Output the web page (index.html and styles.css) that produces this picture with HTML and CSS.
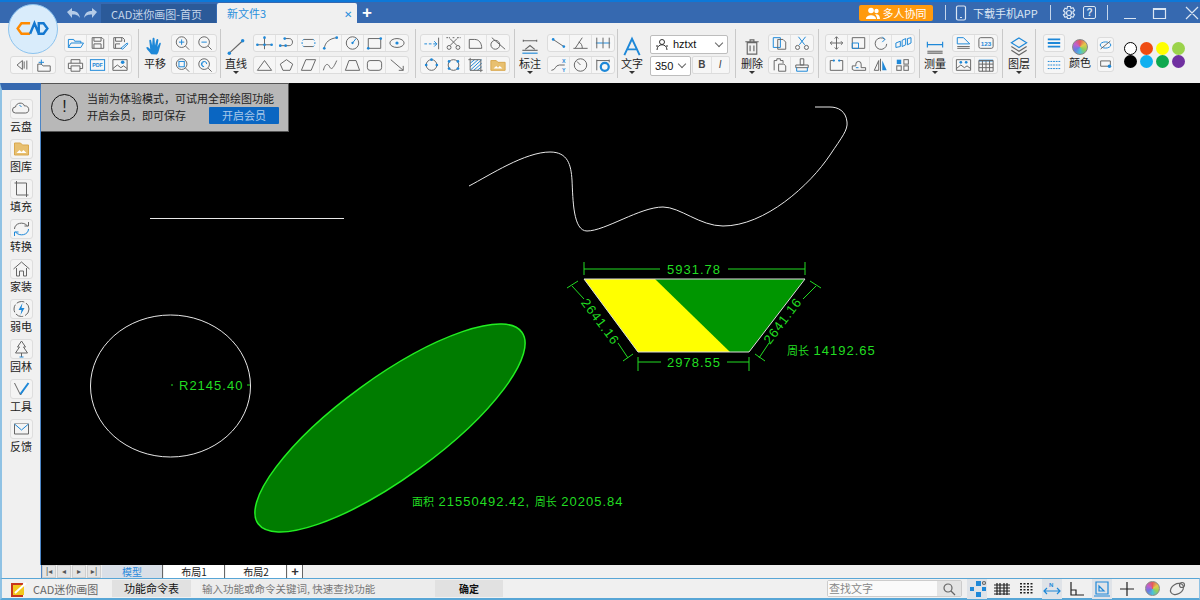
FILE: index.html
```html
<!DOCTYPE html>
<html lang="zh">
<head>
<meta charset="utf-8">
<title>CAD迷你画图</title>
<link rel="stylesheet" href="styles.css">
</head>
<body>
<div class="app">
  <header class="titlebar">
    <div class="logo"><svg viewBox="0 0 50 50" width="50" height="50"><path class="lo" d="M22 19H13l-4 5.500 4 5.500h9"/><path class="lb" d="M22 30l4.500-11 4.500 11M31 19h5l4 5.500-4 5.500h-5z"/></svg></div>
    <svg class="ti undo" viewBox="0 0 36 14" width="36" height="14"><path d="M3 6l5-4v3c4 0 7 1 8 7-2-3-4-3.500-8-3.500V12zM33 6l-5-4v3c-4 0-7 1-8 7 2-3 4-3.500 8-3.500V12z"/></svg>
    <div class="tab tab-home">CAD迷你画图-首页</div>
    <div class="tab tab-doc"><span>新文件3</span><span class="tab-x">✕</span></div>
    <div class="tab-plus">+</div>
    <div class="collab"><svg viewBox="0 0 14 12" width="14" height="12"><circle cx="5" cy="3.500" r="2.800"/><circle cx="10.500" cy="4" r="2.200"/><path d="M0 12c0-5 10-5 10 0zM11 12c0-2-.5-3.500-2-4.500 3-1 5 1 5 4.500z"/></svg>多人协同</div>
    <i class="tsep s1"></i>
    <svg class="tline phone" viewBox="0 0 12 16" width="12" height="16"><rect x="1.500" y="1" width="9" height="14" rx="1.500"/><path d="M5 12.500h2"/></svg>
    <span class="dl">下载手机APP</span>
    <i class="tsep s2"></i>
    <svg class="tline gear" viewBox="0 0 16 16" width="16" height="16"><circle cx="8" cy="8" r="2.500"/><path d="M6.500 1.500h3l.5 2 2-.8 1.500 2.600-1.500 1.400v1.600l1.500 1.400-1.500 2.600-2-.8-.5 2h-3l-.5-2-2 .8-1.500-2.600L4 8.800V7.200L2.500 5.800 4 3.200l2 .8z"/></svg>
    <span class="help">?</span>
    <i class="tsep s3"></i>
    <svg class="tline win" viewBox="0 0 76 14" width="76" height="14"><path d="M0 12.500h12M29.500 2.500h12v10h-12zM29.500 3.500h12M62 1l12 12M74 1L62 13"/></svg>
  </header>

  <nav class="ribbon">
    <section class="sec s-a">
      <div class="col col-low">
        <div class="bg">
          <svg class="tb" viewBox="0 0 22 18"><path d="M12 4l-6 5 6 5zM14 5v8M17 4v10"/></svg>
          <svg class="tb" viewBox="0 0 22 18"><path class="b" d="M8 3v6M5 6h6"/><path d="M4 8h4l2 2h8v6H4z"/></svg>
        </div>
      </div>
      <div class="col">
        <div class="bg">
          <svg class="tb" viewBox="0 0 22 18"><path class="b" d="M3 5h6l1 2h7v2"/><path class="b" d="M3 14V5M3 14l3-5h14l-3 5z"/></svg>
          <svg class="tb" viewBox="0 0 22 18"><path d="M5 3h11l2 2v10H5zM7 3v4h8V3M7 15v-5h8v5"/></svg>
          <svg class="tb" viewBox="0 0 22 18"><path d="M13 15H4V3h10l2 2v3M6 3v4h7V3M6 15v-5h5"/><path class="b" d="M12 15l7-6 1 1-6 6z"/></svg>
        </div>
        <div class="bg">
          <svg class="tb" viewBox="0 0 22 18"><path d="M6 7V3h10v4M6 13H3V7h16v6h-3M6 10h10v6H6z"/></svg>
          <svg class="tb" viewBox="0 0 22 18"><rect class="b" x="3" y="3" width="16" height="12"/><text class="pdf" x="11" y="11.500" text-anchor="middle">PDF</text></svg>
          <svg class="tb" viewBox="0 0 22 18"><path d="M3 3h16v12H3zM3 13l5-4 4 3 3-2 4 3"/><circle class="fb" cx="14" cy="6" r="2"/></svg>
        </div>
      </div>
    </section>

    <section class="sec s-b">
      <div class="big w32">
        <svg class="bi" viewBox="0 0 22 22"><path class="fb" d="M7 19c-2-3-5-5-5-7 1-1 2 0 4 2l-1-9c0-1.500 2-1.500 2 0l1 5 .5-7c0-1.500 2-1.500 2 0l.5 7 1.500-6c.5-1.500 2-1 2 .5l-1 7 2-4c1-1 2 0 1.500 1l-2 7c-.5 2-1 3-2 4z"/></svg>
        <span class="lbl">平移</span>
      </div>
      <div class="col">
        <div class="bg">
          <svg class="tb" viewBox="0 0 22 18"><circle cx="10" cy="8" r="6"/><path class="b" d="M7 8h6M10 5v6"/><path d="M14.500 12.500l4 4"/></svg>
          <svg class="tb" viewBox="0 0 22 18"><circle cx="10" cy="8" r="6"/><path class="b" d="M7 8h6"/><path d="M14.500 12.500l4 4"/></svg>
        </div>
        <div class="bg">
          <svg class="tb" viewBox="0 0 22 18"><circle cx="10" cy="8" r="6"/><rect class="b" x="7" y="5" width="6" height="6"/><path d="M14.500 12.500l4 4"/></svg>
          <svg class="tb" viewBox="0 0 22 18"><circle cx="10" cy="8" r="6"/><path class="b" d="M13 8a3 3 0 1 0-3 3M7 8l2-2M7 8l2 2"/><path d="M14.500 12.500l4 4"/></svg>
        </div>
      </div>
    </section>

    <section class="sec s-c">
      <div class="big w30">
        <svg class="bi" viewBox="0 0 22 22"><path d="M4 18L18 5"/><circle class="fb" cx="4" cy="18" r="1.800"/><circle class="fb" cx="18" cy="5" r="1.800"/></svg>
        <span class="lbl">直线</span><i class="caret"></i>
      </div>
      <div class="col">
        <div class="bg">
          <svg class="tb" viewBox="0 0 22 18"><path d="M11 2v14M3 11h16"/><circle class="fb" cx="11" cy="3" r="1.500"/><circle class="fb" cx="11" cy="11" r="1.500"/><circle class="fb" cx="3" cy="11" r="1.500"/><circle class="fb" cx="19" cy="11" r="1.500"/></svg>
          <svg class="tb" viewBox="0 0 22 18"><path d="M3 12h11c5 0 5-8 0-8H9"/><circle class="fb" cx="4" cy="12" r="1.500"/><circle class="fb" cx="10" cy="12" r="1.500"/><circle class="fb" cx="9" cy="4" r="1.500"/></svg>
          <svg class="tb" viewBox="0 0 22 18"><path d="M6 5h10M6 13h10"/><path class="b" d="M6 5c-3 0-3 8 0 8M16 5c3 0 3 8 0 8" stroke-dasharray="2 2"/></svg>
          <svg class="tb" viewBox="0 0 22 18"><path d="M4 15C5 8 10 4 18 3"/><circle class="fb" cx="4" cy="15" r="1.500"/><circle class="fb" cx="18" cy="3" r="1.500"/></svg>
          <svg class="tb" viewBox="0 0 22 18"><circle cx="11" cy="9" r="7"/><path class="b" d="M11 9l4-5"/><circle class="fb" cx="11" cy="9" r="1.300"/></svg>
          <svg class="tb" viewBox="0 0 22 18"><path d="M4 4h14v11H4z"/><circle class="fb" cx="18" cy="4" r="1.500"/><circle class="fb" cx="4" cy="15" r="1.500"/></svg>
          <svg class="tb" viewBox="0 0 22 18"><ellipse cx="11" cy="9" rx="8" ry="5"/><circle class="fb" cx="11" cy="9" r="1.800"/></svg>
        </div>
        <div class="bg">
          <svg class="tb" viewBox="0 0 22 18"><path d="M11 4l8 11H3z"/></svg>
          <svg class="tb" viewBox="0 0 22 18"><path d="M11 3l7 5-3 7H7L4 8z"/></svg>
          <svg class="tb" viewBox="0 0 22 18"><path d="M8 3h11l-5 12H3z"/></svg>
          <svg class="tb" viewBox="0 0 22 18"><path d="M3 15c2-8 5-8 7-4s4 2 8-7"/></svg>
          <svg class="tb" viewBox="0 0 22 18"><path d="M7 4h8l4 11H3z"/></svg>
          <svg class="tb" viewBox="0 0 22 18"><rect x="3" y="4" width="16" height="11" rx="3"/></svg>
          <svg class="tb" viewBox="0 0 22 18"><path d="M4 3l14 12M18 10v5h-5"/></svg>
        </div>
      </div>
    </section>

    <section class="sec s-d">
      <div class="col">
        <div class="bg">
          <svg class="tb" viewBox="0 0 22 18"><path class="b" d="M3 10h3M8 10h3M13 10h4M14 7l3 3-3 3"/><path d="M19 3v13"/></svg>
          <svg class="tb" viewBox="0 0 22 18"><path d="M3 3h4M10 3h3M15 3h4" stroke-dasharray="2 1"/><path d="M7 4l8 8M15 4l-8 8"/><circle cx="6" cy="14" r="2.200"/><circle cx="16" cy="14" r="2.200"/></svg>
          <svg class="tb" viewBox="0 0 22 18"><path d="M4 15V5h6c5 0 8 4 8 10z"/></svg>
          <svg class="tb" viewBox="0 0 22 18"><circle cx="8" cy="11" r="5"/><path d="M4 3l15 13"/></svg>
        </div>
        <div class="bg">
          <svg class="tb" viewBox="0 0 22 18"><circle cx="11" cy="9" r="6"/><circle class="fb" cx="11" cy="3" r="1.500"/><circle class="fb" cx="5" cy="9" r="1.500"/><circle class="fb" cx="17" cy="9" r="1.500"/></svg>
          <svg class="tb" viewBox="0 0 22 18"><circle cx="11" cy="9" r="6"/><circle class="fb" cx="6" cy="5" r="1.500"/><circle class="fb" cx="16" cy="5" r="1.500"/><circle class="fb" cx="6" cy="13" r="1.500"/><circle class="fb" cx="16" cy="13" r="1.500"/></svg>
          <svg class="tb" viewBox="0 0 22 18"><path class="b" d="M5 7l5-4M5 11l9-8M5 15l13-12M9 15l9-8M13 15l5-4"/><path d="M5 3h12v12H5zM3 3h2M17 15h2M5 1v2M17 15v2"/></svg>
          <svg class="tb" viewBox="0 0 22 18"><path class="org" d="M3 4h6l2 2h8v9H3z"/><path class="wht" d="M6 13l3-3 2 2 2-2 3 3z"/></svg>
        </div>
      </div>
    </section>

    <section class="sec s-e">
      <div class="big w30">
        <svg class="bi" viewBox="0 0 22 22"><path d="M4 6V4M18 6V4M4 5h14M6 14l5-4 5 4"/><path class="b" d="M3 18h16"/><path d="M3 15h16"/></svg>
        <span class="lbl">标注</span><i class="caret"></i>
      </div>
      <div class="col">
        <div class="bg">
          <svg class="tb" viewBox="0 0 22 18"><path d="M5 5l12 8"/><circle class="fb" cx="5" cy="5" r="1.500"/><circle class="fb" cx="17" cy="13" r="1.500"/></svg>
          <svg class="tb" viewBox="0 0 22 18"><path d="M3 15h16M5 15L13 3M9 8c3 1 4 4 4 7"/></svg>
          <svg class="tb" viewBox="0 0 22 18"><path class="b" d="M3 9h16"/><path d="M4 3v12M11 3v12M18 3v12"/></svg>
        </div>
        <div class="bg">
          <svg class="tb" viewBox="0 0 22 18"><path d="M3 15c5 0 4-6 9-6h6"/><text class="xy" x="15" y="7">X</text><text class="xy" x="15" y="17">Y</text></svg>
          <svg class="tb" viewBox="0 0 22 18"><circle cx="11" cy="9" r="7"/><path d="M11 9L7 5"/></svg>
          <svg class="tb" viewBox="0 0 22 18"><path d="M4 3v12M18 3v3M4 4h14"/><circle class="b" cx="13" cy="11" r="4.500" stroke-width="2.500"/></svg>
        </div>
      </div>
    </section>

    <section class="sec s-f">
      <div class="big w28">
        <svg class="bi" viewBox="0 0 22 22"><path class="b bold" d="M3 20l8-17 8 17M6 14h10"/></svg>
        <span class="lbl">文字</span><i class="caret"></i>
      </div>
      <div class="txtcol">
        <div class="combo font"><svg class="tbx" viewBox="0 0 14 12" width="14" height="12"><circle cx="7" cy="3" r="2.500"/><path d="M2 11c0-7 10-7 10 0M1 7h2M11 7h2"/></svg><span>hztxt</span><i class="chev"></i></div>
        <div class="txtrow">
          <div class="combo size"><span>350</span><i class="chev"></i></div>
          <div class="bi-group"><b>B</b><em>I</em></div>
        </div>
      </div>
    </section>

    <section class="sec s-g">
      <div class="big w32">
        <svg class="bi" viewBox="0 0 22 22"><path d="M6 7h10v12H6zM4 6h14M9 6V4h4v2M9 10v6M13 10v6"/></svg>
        <span class="lbl">删除</span><i class="caret"></i>
      </div>
      <div class="col">
        <div class="bg">
          <svg class="tb" viewBox="0 0 22 18"><path class="b" d="M4 3h8v11H4z"/><path d="M9 5h6l3 3v8H9z"/></svg>
          <svg class="tb" viewBox="0 0 22 18"><path class="b" d="M7 2l7 9M15 2l-7 9"/><circle cx="6" cy="14" r="2.300"/><circle cx="16" cy="14" r="2.300"/></svg>
        </div>
        <div class="bg">
          <svg class="tb" viewBox="0 0 22 18"><path d="M5 15V4h3V2h4v2h3v3M10 8h6l2 2v6h-8z"/></svg>
          <svg class="tb" viewBox="0 0 22 18"><path d="M9 2h4v7H9zM4 9h14v3H4z"/><path class="b" d="M5 12v4h12v-4"/></svg>
        </div>
      </div>
    </section>

    <section class="sec s-h">
      <div class="col">
        <div class="bg">
          <svg class="tb" viewBox="0 0 22 18"><path d="M11 2v14M4 9h14M9 4l2-2 2 2M9 14l2 2 2-2M6 7L4 9l2 2M16 7l2 2-2 2"/></svg>
          <svg class="tb" viewBox="0 0 22 18"><path d="M4 3h14v12H4z"/><path class="b" d="M4 9h7v6H4z"/></svg>
          <svg class="tb" viewBox="0 0 22 18"><path d="M16 5a6.500 6.500 0 1 0 2 5"/><path class="b" d="M13 2l3 3-3 3"/></svg>
          <svg class="tb" viewBox="0 0 22 18"><path class="b" d="M3 9l5-2v6l-5 1zM10 6l4-2v7l-4 2zM16 4l4-1v6l-4 2z"/></svg>
        </div>
        <div class="bg">
          <svg class="tb" viewBox="0 0 22 18"><path d="M7 4H4v11h14V4h-3"/><circle class="fb" cx="8" cy="4" r="1.300"/><circle class="fb" cx="14" cy="4" r="1.300"/></svg>
          <svg class="tb" viewBox="0 0 22 18"><path d="M6 15h13v-3h-5V8a3 3 0 0 0-6 0v2H4v4z"/><path class="b" d="M8 12h3"/></svg>
          <svg class="tb" viewBox="0 0 22 18"><path d="M4 15l5-11v11zM11 2v14"/><path class="fb" d="M13 4l5 11h-5z"/></svg>
          <svg class="tb" viewBox="0 0 22 18"><rect class="fb" x="4" y="3" width="5" height="5"/><rect x="12" y="3" width="5" height="5"/><rect x="4" y="10" width="5" height="5"/><rect x="12" y="10" width="5" height="5"/></svg>
        </div>
      </div>
    </section>

    <section class="sec s-i">
      <div class="big w30">
        <svg class="bi" viewBox="0 0 22 22"><path class="b" d="M3 9h16M3 6v6M19 6v6"/><path d="M3 16h16M3 18h16"/></svg>
        <span class="lbl">测量</span><i class="caret"></i>
      </div>
      <div class="col">
        <div class="bg">
          <svg class="tb" viewBox="0 0 22 18"><path class="b" d="M4 3h7l7 7H4z"/><path d="M4 13h14M4 15h14"/></svg>
          <svg class="tb" viewBox="0 0 22 18"><rect x="3" y="3" width="16" height="12" rx="2"/><text class="n123" x="11" y="12" text-anchor="middle">123</text></svg>
        </div>
        <div class="bg">
          <svg class="tb" viewBox="0 0 22 18"><path d="M3 3h16v12H3zM3 13l5-4 4 3 3-2 4 3"/><circle class="fb" cx="8" cy="6" r="1.500"/><circle class="fb" cx="14" cy="6" r="1.500"/></svg>
          <svg class="tb" viewBox="0 0 22 18"><path class="b bold" d="M3 4h16"/><path d="M3 4h16v12H3zM3 8h16M3 12h16M7 4v12M11 4v12M15 4v12"/></svg>
        </div>
      </div>
    </section>

    <section class="sec s-j">
      <div class="big w-all">
        <svg class="bi" viewBox="0 0 22 22"><path class="b" d="M11 2l8 5-8 5-8-5z"/><path d="M3 11l8 5 8-5M3 15l8 5 8-5"/></svg>
        <span class="lbl">图层</span><i class="caret"></i>
      </div>
    </section>

    <section class="sec s-k">
      <div class="col">
        <div class="bg solo">
          <svg class="tb" viewBox="0 0 22 18"><path class="b bold" d="M4 5h14M4 9h14M4 13h14"/></svg>
        </div>
        <div class="bg solo">
          <svg class="tb" viewBox="0 0 22 18"><path class="b" d="M4 5h14M4 9h14M4 13h14" stroke-dasharray="2 1"/></svg>
        </div>
      </div>
      <div class="big w30 color">
        <span class="wheel"></span>
        <span class="lbl">颜色</span>
      </div>
      <div class="col small">
        <div class="bg solo">
          <svg class="tb" viewBox="0 0 17 15"><ellipse class="b" cx="8.500" cy="7.500" rx="6" ry="3.500"/><path d="M3 12L14 3"/></svg>
        </div>
        <div class="bg solo">
          <svg class="tb" viewBox="0 0 17 15"><path d="M3 4h11v6H3z"/><circle class="fb" cx="13" cy="10" r="2"/></svg>
        </div>
      </div>
      <div class="swatches">
        <i class="sw sw-white"></i><i class="sw sw-red"></i><i class="sw sw-yellow"></i><i class="sw sw-lime"></i>
        <i class="sw sw-black"></i><i class="sw sw-sky"></i><i class="sw sw-green"></i><i class="sw sw-purple"></i>
      </div>
    </section>
  </nav>

  <main class="main">
    <aside class="side">
      <div class="side-item"><svg class="si" viewBox="0 0 20 18"><path d="M4 13a3 3 0 0 1 0-6c1-5 8-5 9-1 5-1 6 7 1 7z"/><path class="b" d="M8 5l2 2"/></svg><span>云盘</span></div>
      <div class="side-item"><svg class="si" viewBox="0 0 20 18"><path class="org" d="M3 3h6l2 2h6v10H3z"/><path class="wht" d="M5 13l3-3 2 2 2-2 3 3z"/></svg><span>图库</span></div>
      <div class="side-item"><svg class="si" viewBox="0 0 20 18"><path class="b" d="M5 7l4-4M5 11l8-8M5 15l10-10M9 15l6-6"/><path d="M5 3h10v12H5zM3 3h2M15 15h2M5 1v2M15 15v2"/></svg><span>填充</span></div>
      <div class="side-item"><svg class="si" viewBox="0 0 20 18"><path d="M3 9c0-6 9-8 13-3M13 6h4V2"/><path class="b" d="M17 9c0 6-9 8-13 3M7 12H3v4"/></svg><span>转换</span></div>
      <div class="side-item"><svg class="si" viewBox="0 0 20 18"><path d="M2 9l8-7 8 7M5 8v8h3v-5h4v5h3V8"/></svg><span>家装</span></div>
      <div class="side-item"><svg class="si" viewBox="0 0 20 18"><circle cx="10" cy="9" r="7.500" stroke-dasharray="8 2"/><path class="fb" d="M11 3L7 10h3l-1 5 4-7h-3z"/></svg><span>弱电</span></div>
      <div class="side-item"><svg class="si" viewBox="0 0 20 18"><path d="M10 1l4 6h-2l4 6H4l4-6H6zM10 13v4"/><path class="b" d="M8 17h4"/></svg><span>园林</span></div>
      <div class="side-item"><svg class="si" viewBox="0 0 20 18"><path d="M3 3l6 12 3-5"/><path class="b bold" d="M9 14L17 3"/></svg><span>工具</span></div>
      <div class="side-item"><svg class="si" viewBox="0 0 20 18"><path d="M3 4h14v10H3z"/><path class="b" d="M3 4l7 6 7-6"/></svg><span>反馈</span></div>
    </aside>

    <div class="canvas">
      <svg class="draw" viewBox="41 83 1159 482" width="1159" height="482">
        <path class="w" d="M150 218.500H344"/>
        <ellipse class="w" cx="170.500" cy="386" rx="80" ry="71"/>
        <path class="w" d="M469 186C490 175 525 152 550 152C568 152 571 165 572 180C573 200 573 231 587 231C605 231 640 207 663 207C680 207 700 226 723 226C765 226 810 185 830 155C842 137 848 130 847 122C846 111 838 107 830 107H815"/>
        <ellipse class="blob" cx="390" cy="428" rx="163" ry="50" transform="rotate(-36 390 428)"/>

        <polygon class="f-green" points="584,279 805,279 749,352 638,352"/>
        <polygon class="f-yellow" points="584,279 655,279 730,352 638,352"/>
        <polygon class="edge" points="584,279 805,279 749,352 638,352"/>

        <path class="g" d="M584 262v13M805 262v13M584 269h76M728 269h77M638 357v14M749 357v14M638 362h23M727 362h22M567 288l11-7M623 361l10-7M572 286l12 13M618 343l10 15M821 288l-11-7M765 361l-10-7M816 286l-13 13M769 343l-10 15"/>
        <text class="gt" x="694" y="274" text-anchor="middle">5931.78</text>
        <text class="gt" x="694" y="367" text-anchor="middle">2978.55</text>
        <text class="gt" transform="translate(600 322) rotate(53)" text-anchor="middle" y="4">2641.16</text>
        <text class="gt" transform="translate(783 321) rotate(-53)" text-anchor="middle" y="4">2641.16</text>
        <text class="gt" x="787" y="355"><tspan class="cjk">周长</tspan> 14192.65</text>
        <text class="gt" x="179" y="390">R2145.40</text>
        <path class="g" d="M171 385h2M247 385h3"/>
        <text class="gt" x="412" y="506"><tspan class="cjk">面积</tspan> 21550492.42, <tspan class="cjk">周长</tspan> 20205.84</text>
      </svg>

      <div class="notice">
        <span class="notice-ic">!</span>
        <div class="notice-body">
          <p>当前为体验模式，可试用全部绘图功能</p>
          <div class="notice-row"><p>开启会员，即可保存</p><span class="notice-btn">开启会员</span></div>
        </div>
      </div>
    </div>
  </main>

  <div class="sheets">
    <div class="sheet-side"></div>
    <div class="nav-btn">|◂</div><div class="nav-btn">◂</div><div class="nav-btn">▸</div><div class="nav-btn">▸|</div>
    <div class="sheet active">模型</div>
    <div class="sheet">布局1</div>
    <div class="sheet">布局2</div>
    <div class="sheet-add">+</div>
  </div>

  <footer class="status">
    <svg class="app-ic" viewBox="0 0 17 16" width="17" height="16"><path class="ai-r" d="M0 2h12v14H0z"/><path class="ai-y" d="M2 4h11v10H2z"/><path class="ai-p" d="M4 12L15 2"/></svg>
    <span class="app-name">CAD迷你画图</span>
    <span class="cmd-table">功能命令表</span>
    <span class="cmd-input">输入功能或命令关键词, 快速查找功能</span>
    <span class="cmd-ok">确定</span>
    <div class="find"><span class="find-t">查找文字</span><span class="find-b"><svg class="st" viewBox="0 0 14 14" width="14" height="14"><circle cx="6" cy="6" r="4"/><path d="M9 9l4 4"/></svg></span></div>
    <div class="tools">
      <span class="st-b on"><svg class="st" viewBox="0 0 20 18" width="20" height="18"><path class="fb" d="M9 1h5v5H9zM9 12h5v5H9zM3 7h4v4H3zM15 7h4v4h-4z"/><circle cx="17" cy="3" r="1.500"/></svg></span>
      <span class="st-b"><svg class="st dk" viewBox="0 0 18 16" width="18" height="16"><path d="M4 2v12M7 2v12M11 2v12M14 2v12M1 4h16M1 7h16M1 10h16M1 13h16"/></svg></span>
      <span class="st-b"><svg class="st dk dots" viewBox="0 0 16 14" width="16" height="14"><path d="M2 1v12M5.500 1v12M9 1v12M12.500 1v12" stroke-dasharray="1.500 1.500"/></svg></span>
      <span class="st-b on"><svg class="st" viewBox="0 0 20 18" width="20" height="18"><path class="b" d="M2 11h16M5 8l-3 3 3 3M15 8l3 3-3 3"/><text class="xy bl" x="7" y="7">N</text></svg></span>
      <span class="st-b"><svg class="st dk" viewBox="0 0 18 16" width="18" height="16"><path d="M3 1v13h13M3 9h5v5"/></svg></span>
      <span class="st-b on"><svg class="st" viewBox="0 0 18 16" width="18" height="16"><path class="b" d="M3 1h12v12H3zM1 15h16M6 10V5l5 5z"/></svg></span>
      <span class="st-b"><svg class="st dk" viewBox="0 0 16 16" width="16" height="16"><path d="M8 1v14M1 8h14"/></svg></span>
      <span class="st-b"><span class="wheel wheel-s"></span></span>
      <span class="st-b"><svg class="st" viewBox="0 0 20 16" width="20" height="16"><ellipse cx="10" cy="8" rx="7" ry="5" transform="rotate(-30 10 8)"/><circle cx="15" cy="4" r="2.500"/></svg></span>
    </div>
  </footer>
</div>
</body>
</html>
```
FILE: styles.css
```css
* { box-sizing: border-box; }
html, body { margin: 0; padding: 0; height: 100%; overflow: hidden; }
body { font-family: "Noto Sans CJK SC", "Liberation Sans", sans-serif; font-size: 11px; color: #222; background: #f0f0f0; }
p { margin: 0; }
.app { width: 1200px; height: 600px; display: flex; flex-direction: column; position: relative; }

/* Title bar */
.titlebar { height: 23px; display: flex; align-items: center; background: #3669b0; border-top: 2px solid #0d78d8; position: relative; color: #fff; flex: none; }
.logo { position: absolute; left: 8px; top: 2px; width: 50px; height: 50px; border-radius: 50%; background: #d9ecfb; border: 1px solid #8cc3ee; z-index: 3; display: flex; align-items: center; justify-content: center; }
.logo svg { display: block; }
.lo, .lb { fill: none; stroke-width: 2.500; }
.lo { stroke: #ff8a00; }
.lb { stroke: #1478d0; }
.ti.undo { margin-left: 64px; fill: #b5cce8; flex: none; }
.tab { height: 20px; display: flex; align-items: center; flex: none; font-size: 11px; }
.tab-home { margin-left: 1px; width: 115px; background: #2b5a99; color: #c4d5ea; padding-left: 10px; align-self: flex-end; height: 19px; }
.tab-doc { margin-left: 1px; width: 140px; background: #f0f0f0; color: #2a8fdc; padding: 0 5px 0 10px; justify-content: space-between; align-self: flex-end; border-radius: 2px 2px 0 0; }
.tab-x { font-size: 10px; }
.tab-plus { margin-left: 4px; font: 700 17px/1 "Liberation Sans", sans-serif; color: #fff; width: 12px; text-align: center; }
.collab { margin-left: 486px; width: 74px; height: 16px; background: #ff9a0e; border-radius: 2px; display: flex; align-items: center; justify-content: center; gap: 3px; color: #fff; font-size: 11px; flex: none; }
.collab svg { fill: #fff; }
.tsep { width: 1px; height: 15px; background: #c5d6eb; flex: none; }
.s1 { margin-left: 12px; }
.tline { fill: none; stroke: #dbe6f3; stroke-width: 1.200; flex: none; }
.phone { margin-left: 9px; }
.dl { margin-left: 6px; width: 66px; color: #dbe6f3; font-size: 11px; white-space: nowrap; flex: none; }
.s2 { margin-left: 11px; }
.gear { margin-left: 10px; }
.help { margin-left: 6px; width: 13px; height: 13px; border: 1px solid #dbe6f3; border-radius: 2px; font: 700 10px/11px "Liberation Sans", sans-serif; text-align: center; color: #dbe6f3; flex: none; }
.s3 { margin-left: 11px; }
.win { margin-left: 16px; }

/* Ribbon */
.ribbon { height: 60px; flex: none; background: #f0f0f0; display: grid; grid-template-columns: 139px 82px 195px 99px 103px 118px 83px 101px 83px 33px 1fr; align-items: start; }
.sec { margin-top: 6px; height: 49px; padding-top: 5px; border-right: 1px solid #c9c9c9; display: flex; align-items: flex-start; }
.sec:last-child { border-right: 0; }
.s-a { padding-left: 10px; gap: 8px; }
.s-d { padding-left: 4px; }
.s-c, .s-e, .s-i { gap: 2px; }
.s-f { gap: 4px; }
.s-h { padding-left: 6px; }
.s-k { padding-left: 7px; }
.col { display: flex; flex-direction: column; gap: 4px; }
.col-low { justify-content: flex-end; height: 40px; }
.bg { display: flex; height: 18px; background: #f6f6f6; border: 1px solid #dcdcdc; border-radius: 3px; width: max-content; }
.tb { width: 22px; height: 16px; display: block; fill: none; stroke: #666; stroke-width: 1.100; flex: none; }
.s-k .tb { width: 20px; }
.s-a .bg .tb:not(:last-child), .s-b .bg .tb:not(:last-child), .s-c .bg .tb:not(:last-child), .s-d .bg .tb:not(:last-child), .s-e .bg .tb:not(:last-child), .s-g .bg .tb:not(:last-child), .s-h .bg .tb:not(:last-child), .s-i .bg .tb:not(:last-child) { border-right: 1px solid #e2e2e2; }
.b { stroke: #1e88d8; }
.bold { stroke-width: 2; }
.fb { fill: #1e88d8; stroke: none; }
.org { fill: #e8c070; stroke: #d9a84e; }
.wht { fill: #fff; stroke: none; }
.pdf { font: 700 6px "Liberation Sans", sans-serif; fill: #1e88d8; stroke: none; }
.xy { font: 700 6px "Liberation Sans", sans-serif; fill: #1e88d8; stroke: none; }
.n123 { font: 700 7px "Liberation Sans", sans-serif; fill: #1e88d8; stroke: none; }
.big { display: flex; flex-direction: column; align-items: center; margin-top: 2px; flex: none; }
.bi { width: 22px; height: 21px; display: block; fill: none; stroke: #666; stroke-width: 1.200; }
.lbl { font-size: 11px; line-height: 12px; color: #222; white-space: nowrap; }
.caret { width: 0; height: 0; border: 3px solid transparent; border-top-color: #333; border-bottom: 0; margin-top: 2px; }
.w28 { width: 28px; }
.w30 { width: 30px; }
.w32 { width: 32px; }
.w-all { width: 32px; }
.txtcol { display: flex; flex-direction: column; gap: 2px; margin-top: 1px; }
.combo { background: #fff; border: 1px solid #bdbdbd; border-radius: 2px; display: flex; align-items: center; font: 11px/1 "Liberation Sans", sans-serif; color: #111; position: relative; }
.font { width: 78px; height: 19px; padding-left: 4px; gap: 4px; }
.size { width: 41px; height: 20px; padding-left: 4px; }
.tbx { fill: none; stroke: #333; flex: none; }
.chev { position: absolute; right: 5px; top: 50%; width: 6px; height: 6px; margin-top: -5px; border-right: 1px solid #666; border-bottom: 1px solid #666; transform: rotate(45deg); }
.txtrow { display: flex; gap: 1px; }
.bi-group { display: flex; width: 38px; height: 18px; background: #f6f6f6; border: 1px solid #dcdcdc; border-radius: 2px; font: 10px/16px "Liberation Sans", sans-serif; color: #444; }
.bi-group b, .bi-group em { flex: 1; text-align: center; }
.bi-group b { border-right: 1px solid #e2e2e2; }
.color { margin-top: 5px; }
.wheel { display: block; width: 16px; height: 16px; border-radius: 50%; background: conic-gradient(#e35a5a, #e6c84a, #8fd05a, #4cc0d8, #6a7ae0, #c060d0, #e35a5a); border: 1px solid #888; margin-bottom: 1px; }
.wheel-s { width: 15px; height: 15px; margin: 0; }
.small { margin: 3px 0 0 2px; gap: 3px; }
.small .tb { width: 15px; height: 14px; }
.small .bg { height: 16px; }
.swatches { display: grid; grid-template-columns: repeat(4, 13px); gap: 0 3px; margin: 8px 0 0 10px; }
.sw { display: block; width: 13px; height: 13px; border-radius: 50%; }
.sw-white { background: #fff; border: 1px solid #000; }
.sw-red { background: #ef4c12; }
.sw-yellow { background: #ffff00; }
.sw-lime { background: #9bd34b; }
.sw-black { background: #000; }
.sw-sky { background: #0fb0f0; }
.sw-green { background: #0ea84e; }
.sw-purple { background: #7030a0; }

/* Main area */
.main { flex: 1; display: flex; min-height: 0; }
.side { width: 41px; flex: none; background: #f0f0f0; border-left: 2px solid #8fc2e4; border-right: 1px solid #4d86c6; padding-top: 10px; border-top: 7px solid #3669b0; display: flex; flex-direction: column; gap: 7px; }
.side-item { height: 33px; display: flex; flex-direction: column; align-items: center; gap: 2px; font-size: 11px; line-height: 12px; }
.si { width: 21px; height: 18px; flex: none; display: block; fill: #f4f4f4; stroke: #666; stroke-width: 1; background: #f4f4f4; outline: 1px solid #dedede; border-radius: 2px; }
.canvas { flex: 1; background: #000; position: relative; overflow: hidden; }
.draw { display: block; }
.w { fill: none; stroke: #e8e8e8; stroke-width: 1; }
.blob { fill: #007c00; stroke: #22ee22; stroke-width: 1.500; }
.f-green { fill: #009600; }
.f-yellow { fill: #ffff00; }
.edge { fill: none; stroke: #dcdcdc; stroke-width: 1; }
.g { fill: none; stroke: #22dd22; stroke-width: 1; }
.gt { font: 13px "Liberation Sans", sans-serif; fill: #22dd22; letter-spacing: 1px; }
.cjk { font: 11px "Noto Sans CJK SC", sans-serif; letter-spacing: 0; }
.notice { position: absolute; left: 0; top: 0; width: 248px; height: 49px; background: #b8b8b8; border-right: 1px solid #555; border-bottom: 1px solid #555; border-top: 1px solid #555; display: flex; align-items: center; padding-left: 10px; gap: 9px; color: #222; }
.notice-ic { width: 27px; height: 27px; border: 1.500px solid #111; border-radius: 50%; font: 16px/24px "Liberation Sans", sans-serif; text-align: center; flex: none; }
.notice-body { display: flex; flex-direction: column; gap: 1px; font-size: 11px; line-height: 15px; width: 192px; }
.notice-row { display: flex; justify-content: space-between; align-items: center; }
.notice-btn { width: 70px; height: 17px; background: #0a66c2; color: #a9c9ea; text-align: center; line-height: 17px; border-radius: 1px; }

/* Sheet tabs */
.sheets { height: 13px; flex: none; display: flex; background: #f0f0f0; font-size: 10px; line-height: 13px; }
.sheet-side { width: 42px; background: #f0f0f0; border-left: 2px solid #8fc2e4; border-right: 1px solid #4d86c6; }
.nav-btn { width: 14px; margin-right: 1px; background: #e4e4e4; border: 1px solid #cfcfcf; color: #555; font-size: 8px; line-height: 11px; text-align: center; font-family: "DejaVu Sans", sans-serif; }
.sheet { width: 61px; margin-left: 1px; background: #fff; border-right: 1px solid #666; text-align: center; color: #222; }
.sheet.active { background: #d9dfe7; color: #2b8adc; margin-left: 0; }
.sheet-add { width: 15px; margin-left: 1px; border-right: 1px solid #666; background: #fff; font: 700 13px/13px "Liberation Sans", sans-serif; text-align: center; color: #333; }

/* Status bar */
.status { height: 22px; flex: none; display: flex; align-items: center; background: #f0f0f0; border-top: 1px solid #58a6d6; border-bottom: 2px solid #58a6d6; border-left: 2px solid #8fc2e4; border-right: 1px solid #8fc2e4; position: relative; padding-left: 9px; }
.app-ic { flex: none; }
.ai-r { fill: #c8361c; }
.ai-y { fill: #f2c81e; }
.ai-p { fill: none; stroke: #fff; stroke-width: 2; }
.app-name { margin-left: 5px; width: 68px; color: #666; white-space: nowrap; font-size: 11px; }
.cmd-table { margin-left: 11px; width: 79px; height: 17px; background: #e1e1e1; text-align: center; line-height: 17px; color: #111; flex: none; }
.cmd-input { margin-left: 9px; width: 235px; height: 17px; background: #ececec; color: #777; line-height: 17px; padding-left: 2px; white-space: nowrap; flex: none; font-size: 10.500px; }
.cmd-ok { width: 68px; height: 17px; background: #e1e1e1; text-align: center; line-height: 17px; color: #111; flex: none; font-weight: 700; font-size: 10px; }
.find { margin-left: 324px; width: 135px; height: 17px; display: flex; flex: none; border: 1px solid #ccc; border-radius: 2px; }
.find-t { width: 109px; background: #fafafa; color: #888; line-height: 15px; padding-left: 1px; }
.find-b { flex: 1; background: #e4e4e4; display: flex; align-items: center; justify-content: center; }
.tools { display: flex; margin-left: 5px; }
.st-b { width: 20px; height: 20px; margin-right: 5px; display: flex; align-items: center; justify-content: center; flex: none; }
.st-b.on { background: #dfe3e8; }
.st { fill: none; stroke: #666; stroke-width: 1.200; display: block; }
.dk { stroke: #222; }
.dots { stroke-width: 2; }
.bl { fill: #1e88d8; }
```
